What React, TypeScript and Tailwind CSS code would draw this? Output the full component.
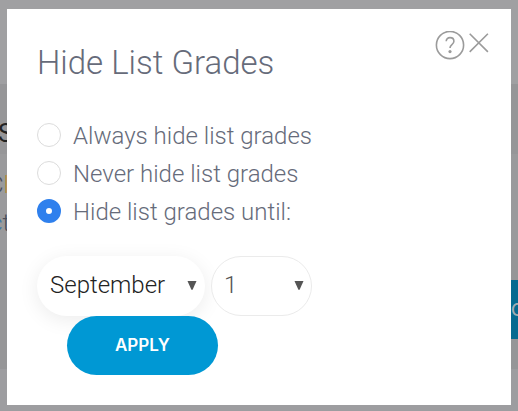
import { useState } from "react";

const options = [
  { value: "always", label: "Always hide list grades" },
  { value: "never", label: "Never hide list grades" },
  { value: "until", label: "Hide list grades until:" },
];

const months = [
  "January", "February", "March", "April", "May", "June",
  "July", "August", "September", "October", "November", "December",
];

const days = Array.from({ length: 31 }, (_, i) => String(i + 1));

function Arrow() {
  return (
    <svg
      className="pointer-events-none absolute right-2 top-6 h-[10px] w-[10px]"
      viewBox="0 0 10 10"
      aria-hidden="true"
    >
      <path d="M0.5 1h9L5.6 9.8H4.4z" fill="#555555" />
    </svg>
  );
}

function Backdrop() {
  return (
    <div className="flex min-h-screen flex-col overflow-hidden bg-[#9d9da0] leading-8" aria-hidden="true">
      <div className="h-[84px] bg-[#a0a0a2]" />
      <div className="h-[70px] bg-[#969698] pt-[34px]">
        <p className="-ml-[2px] text-[25px] text-[#222222]">S</p>
      </div>
      <div className="h-24 bg-[#9a9a9c] pt-3 text-2xl font-light leading-[38px] text-[#4b4f5c]">
        <p className="-ml-3 whitespace-nowrap">
          C<span className="text-[#b58a3c]">l</span>
        </p>
        <p className="-ml-[10px] whitespace-nowrap">
          <span className="text-[#3f78a8]">c</span>t
        </p>
      </div>
      <div className="flex h-[119px] items-center justify-end bg-[#969698]">
        <div className="flex h-[59px] w-[7px] items-center overflow-hidden bg-[#066a90] font-[Inter,sans-serif] text-[17px] font-medium text-[#a3adb3]">
          C
        </div>
      </div>
    </div>
  );
}

export default function App() {
  const [choice, setChoice] = useState("until");
  const [month, setMonth] = useState("September");
  const [day, setDay] = useState("1");

  return (
    <div className="relative min-h-screen font-[Roboto,sans-serif]">
      <Backdrop />
      <div className="absolute inset-0 flex px-[7px] pb-[6px] pt-[9px]">
        <section
          role="dialog"
          aria-labelledby="dialog-title"
          className="flex-1 bg-white px-[30px] pt-[30px] font-light text-[#666b7a]"
        >
          <header className="flex items-start justify-between">
            <h1 id="dialog-title" className="text-[33px] leading-[48px]">
              Hide List Grades
            </h1>
            <div className="-mr-2 -mt-2 flex items-center gap-1">
              <button type="button" aria-label="Help">
                <svg className="h-[30px] w-[30px]" viewBox="0 0 30 30" fill="none" stroke="#9b9b9b" strokeWidth="1.6">
                  <circle cx="15" cy="14" r="13.6" />
                  <path d="M11.2 10.3C11.2 8 12.8 6.6 15 6.6s3.9 1.4 3.9 3.6c0 1.7-1 2.6-2.2 3.6-1.2 1-1.7 1.6-1.7 3.2" />
                  <circle cx="15" cy="20.6" r="1.6" fill="#9b9b9b" stroke="none" />
                </svg>
              </button>
              <button type="button" aria-label="Close" className="pb-[6px]">
                <svg className="h-5 w-5" viewBox="0 0 20 20" fill="none" stroke="#9b9b9b" strokeWidth="1.6">
                  <path d="M.7.7l18.2 18.2M18.9.7L.7 18.9" />
                </svg>
              </button>
            </div>
          </header>

          <form onSubmit={(e) => e.preventDefault()}>
            <fieldset className="mt-[30px]">
              {options.map((o) => (
                <label key={o.value} className="flex items-start gap-3 text-2xl leading-[38px]">
                  <input
                    type="radio"
                    name="visibility"
                    value={o.value}
                    checked={choice === o.value}
                    onChange={() => setChoice(o.value)}
                    className="mt-[6px] h-6 w-6 shrink-0 appearance-none rounded-full border border-[#dcdcdc] bg-white checked:border-[9px] checked:border-[#2f80ed]"
                  />
                  {o.label}
                </label>
              ))}
            </fieldset>

            <div className="mt-[25px] flex gap-[6px] text-2xl">
              <div className="relative">
                <select
                  aria-label="Month"
                  value={month}
                  onChange={(e) => setMonth(e.target.value)}
                  className="h-[60px] w-[168px] appearance-none rounded-full bg-white pb-[2px] pl-[13px] pr-6 text-[#222222] shadow-[0_4px_20px_rgba(0,0,0,0.08)] outline-none"
                >
                  {months.map((m) => (
                    <option key={m}>{m}</option>
                  ))}
                </select>
                <Arrow />
              </div>
              <div className="relative">
                <select
                  aria-label="Day"
                  value={day}
                  onChange={(e) => setDay(e.target.value)}
                  className="h-[60px] w-[101px] appearance-none rounded-full border border-[#ebebeb] bg-white pb-[2px] pl-3 pr-6 text-[#555555] outline-none"
                >
                  {days.map((d) => (
                    <option key={d}>{d}</option>
                  ))}
                </select>
                <Arrow />
              </div>
            </div>

            <button
              type="submit"
              className="relative ml-[30px] block h-[59px] rounded-full bg-[#0098d4] px-12 font-[Inter,sans-serif] text-[17px] font-semibold text-white"
            >
              APPLY
            </button>
          </form>
        </section>
      </div>
    </div>
  );
}
